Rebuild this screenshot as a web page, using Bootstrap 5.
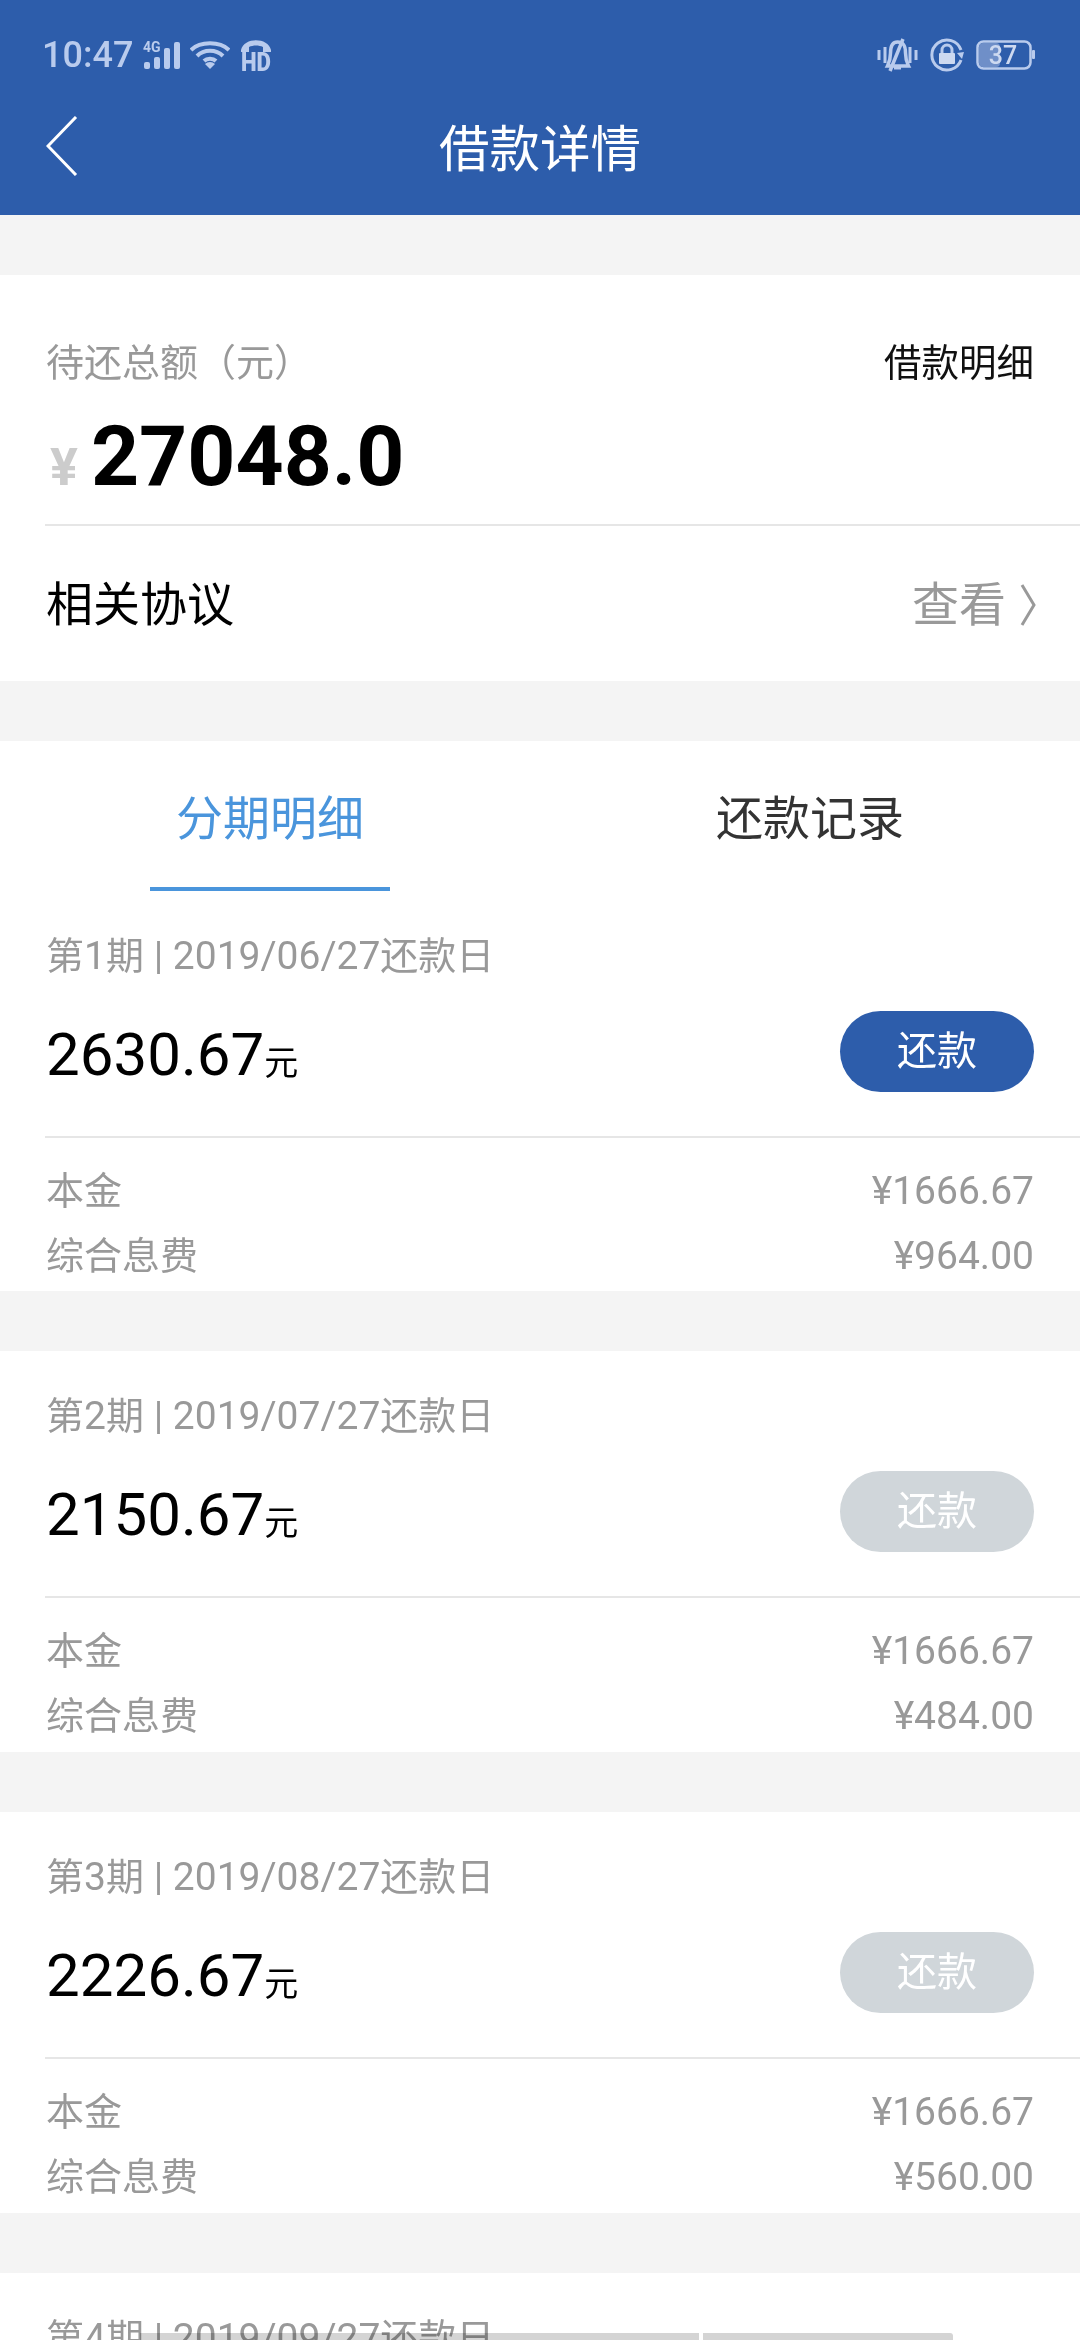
<!DOCTYPE html>
<html lang="zh">
<head>
<meta charset="utf-8">
<title>借款详情</title>
<link href="https://cdn.jsdelivr.net/npm/bootstrap@5.3.0/dist/css/bootstrap.min.css" rel="stylesheet">
<style>
html,body{height:2340px;overflow:hidden;}
body{background:#f4f4f4;font-family:Roboto,"Noto Sans CJK SC",sans-serif;color:#000;position:relative;}
.hdr{background:#2d5dab;height:215px;color:#fff;}
.statusbar{height:86px;padding:24px 45px 0 42px;color:#b9cbed;}
.clock{font-size:36px;font-weight:500;line-height:62px;height:62px;}
.ic-sig{margin-left:10px;}
.ic-wifi{margin-left:9px;}
.ic-hd{margin:6px 0 0 11px;}
.ic-gap{margin-left:12px;}
.titlebar{height:129px;padding:0 78px 10px 46px;}
.pagetitle{flex:1;text-align:center;font-size:50.5px;line-height:62px;margin:8px 0 0;font-weight:400;}
.sect{background:#fff;margin-top:60px;}
.sumtop{height:249px;padding:0 46px;}
.sumhead{margin-top:63px;}
.lbl{color:#999;font-size:38px;line-height:50px;}
.detlink{font-size:37.5px;line-height:50px;color:#111;}
.sumval{margin-top:19px;}
.yen{color:#ccc;font-size:52px;font-weight:700;line-height:1;margin:0 13px 0 4px;}
.total{font-size:84px;font-weight:700;line-height:100px;}
.rule{height:2px;background:#e6e6e6;margin-left:45px;}
.agr{height:155px;padding:3px 44px 0 46px;font-size:47px;}
.agrmore{color:#999;}
.agrarrow{margin-left:14px;}
.tabsrow{height:150px;}
.tabitem{font-size:47px;line-height:60px;color:#333;text-align:center;width:540px;height:150px;padding-top:48px;position:relative;}
.tabitem.on{color:#4a95dc;}
.tabline{position:absolute;left:150px;width:240px;bottom:0;height:4px;background:#4a95dc;}
.plan{height:401px;padding-top:40px;}
.plan.first{margin-top:0;height:400px;}
.planhead{padding:0 46px;color:#999;font-size:38px;line-height:50px;height:50px;}
.numtxt{font-size:39px;}
.planmain{padding:0 46px;height:125px;margin-top:30px;}
.amt{font-size:60px;line-height:87px;}
.unit{font-size:34px;}
.paybtn{width:194px;height:81px;border-radius:41px;border:0;padding:0 0 0 0;font-size:40px;color:#fff;background:#2d5dab;}
.paybtn:disabled{background:#d0d6da;color:#fff;opacity:1;}
.planrows{padding:21px 46px 0;color:#999;font-size:38px;line-height:65px;}
.plan4{height:68px;padding-top:40px;overflow:hidden;}
.navpill{position:absolute;bottom:0;height:7px;background:#d4d4d4;mix-blend-mode:multiply;}
.pill-a{left:140px;width:559px;}
.pill-b{left:703px;width:250px;border-radius:0 3px 0 0;}
</style>
</head>
<body>
<header class="hdr">
  <div class="statusbar d-flex justify-content-between align-items-start">
    <div class="d-flex align-items-center">
      <span class="clock">10:47</span>
      <svg class="ic-sig" width="38" height="30" viewBox="0 0 38 30" fill="#b9cbed"><text x="0" y="12" font-family="Roboto,sans-serif" font-size="14" font-weight="700">4G</text><rect x="1" y="22" width="6" height="7" rx="2"/><rect x="11" y="17" width="6" height="12" rx="2"/><rect x="21" y="8" width="6" height="21" rx="2"/><rect x="31" y="2" width="6" height="27" rx="2"/></svg>
      <svg class="ic-wifi" width="40" height="30" viewBox="0 0 40 30" fill="none" stroke="#b9cbed" stroke-width="4"><path d="M1 10C10 1 30 1 39 10"/><path d="M7 16C14 9 26 9 33 16"/><path d="M14 21C17 18 23 18 26 21"/><path d="M20 29l-5-5a7 7 0 0 1 10 0z" fill="#b9cbed" stroke="none"/></svg>
      <svg class="ic-hd" width="30" height="38" viewBox="0 0 30 38" fill="#b9cbed"><path d="M0 11C3 -2 27 -2 30 11v2h-8V8C18 6 12 6 8 8v5H0z"/><text x="0" y="32" font-family="Roboto,sans-serif" font-size="25" font-weight="900" textLength="30" lengthAdjust="spacingAndGlyphs">HD</text></svg>
    </div>
    <div class="d-flex align-items-center" style="height:62px">
      <svg width="41" height="34" viewBox="0 0 41 34" fill="none" stroke="#b9cbed" stroke-width="3.5"><path d="M2 12v10M8 9v16M33 9v16M39 12v10" stroke-width="3"/><path d="M20.500 4c-6 0-7 5-7 11s-1 9-3 13h21c-2-4-3-7-3-13s-1-11-8-11z"/><path d="M26 1L13 33"/><path d="M17 30h7" stroke-width="3"/></svg>
      <svg class="ic-gap" width="34" height="34" viewBox="0 0 34 34" fill="none" stroke="#b9cbed" stroke-width="3"><path d="M31 22A15 15 0 1 1 31 12"/><path d="M27 15l5 6 2-7z" fill="#b9cbed" stroke="none"/><rect x="9" y="15" width="16" height="11" rx="1" fill="#cdd9f0" stroke="none"/><path d="M12 15v-3a5 5 0 0 1 10 0v3"/></svg>
      <svg class="ic-gap" width="59" height="30" viewBox="0 0 59 30"><rect x="1.500" y="1.500" width="53" height="27" rx="6" fill="none" stroke="#b9cbed" stroke-width="2.500"/><rect x="3" y="3" width="21" height="24" rx="4" fill="#6f8fc8"/><rect x="56" y="10" width="3" height="9" rx="1" fill="#b9cbed"/><text x="27" y="24" text-anchor="middle" font-family="Roboto,sans-serif" font-size="25" font-weight="500" fill="#cdd9f0">37</text></svg>
    </div>
  </div>
  <div class="titlebar d-flex align-items-center">
    <svg width="32" height="60" viewBox="0 0 32 60" fill="none" stroke="#fff" stroke-width="3"><path d="M30 1L2 30l28 29"/></svg>
    <h1 class="pagetitle">借款详情</h1>
  </div>
</header>

<section class="sect">
  <div class="sumtop d-flex flex-column">
    <div class="sumhead d-flex justify-content-between align-items-center">
      <span class="lbl">待还总额（元）</span>
      <span class="detlink">借款明细</span>
    </div>
    <div class="sumval d-flex align-items-baseline">
      <span class="yen">¥</span><span class="total">27048.0</span>
    </div>
  </div>
  <div class="rule"></div>
  <div class="agr d-flex justify-content-between align-items-center">
    <span>相关协议</span>
    <span class="agrmore d-flex align-items-center">查看<svg class="agrarrow" width="16" height="44" viewBox="0 0 16 44" fill="none" stroke="#999" stroke-width="3"><path d="M2 2l12 20L2 42"/></svg></span>
  </div>
</section>

<section class="sect">
  <div class="tabsrow d-flex">
    <div class="tabitem on">分期明细<span class="tabline"></span></div>
    <div class="tabitem">还款记录</div>
  </div>
</section>

<section class="sect plan first">
  <div class="planhead">第<span class="numtxt">1</span>期<span class="numtxt"> | 2019/06/27</span>还款日</div>
  <div class="planmain d-flex justify-content-between align-items-start">
    <span class="amt">2630.67<span class="unit">元</span></span>
    <button class="btn paybtn" type="button">还款</button>
  </div>
  <div class="rule"></div>
  <div class="planrows">
    <div class="d-flex justify-content-between"><span>本金</span><span class="numtxt">¥1666.67</span></div>
    <div class="d-flex justify-content-between"><span>综合息费</span><span class="numtxt">¥964.00</span></div>
  </div>
</section>

<section class="sect plan">
  <div class="planhead">第<span class="numtxt">2</span>期<span class="numtxt"> | 2019/07/27</span>还款日</div>
  <div class="planmain d-flex justify-content-between align-items-start">
    <span class="amt">2150.67<span class="unit">元</span></span>
    <button class="btn paybtn" type="button" disabled>还款</button>
  </div>
  <div class="rule"></div>
  <div class="planrows">
    <div class="d-flex justify-content-between"><span>本金</span><span class="numtxt">¥1666.67</span></div>
    <div class="d-flex justify-content-between"><span>综合息费</span><span class="numtxt">¥484.00</span></div>
  </div>
</section>

<section class="sect plan">
  <div class="planhead">第<span class="numtxt">3</span>期<span class="numtxt"> | 2019/08/27</span>还款日</div>
  <div class="planmain d-flex justify-content-between align-items-start">
    <span class="amt">2226.67<span class="unit">元</span></span>
    <button class="btn paybtn" type="button" disabled>还款</button>
  </div>
  <div class="rule"></div>
  <div class="planrows">
    <div class="d-flex justify-content-between"><span>本金</span><span class="numtxt">¥1666.67</span></div>
    <div class="d-flex justify-content-between"><span>综合息费</span><span class="numtxt">¥560.00</span></div>
  </div>
</section>

<section class="sect plan4">
  <div class="planhead">第<span class="numtxt">4</span>期<span class="numtxt"> | 2019/09/27</span>还款日</div>
</section>

<div class="navpill pill-a"></div>
<div class="navpill pill-b"></div>
<script src="https://cdn.jsdelivr.net/npm/bootstrap@5.3.0/dist/js/bootstrap.bundle.min.js"></script>
</body>
</html>
